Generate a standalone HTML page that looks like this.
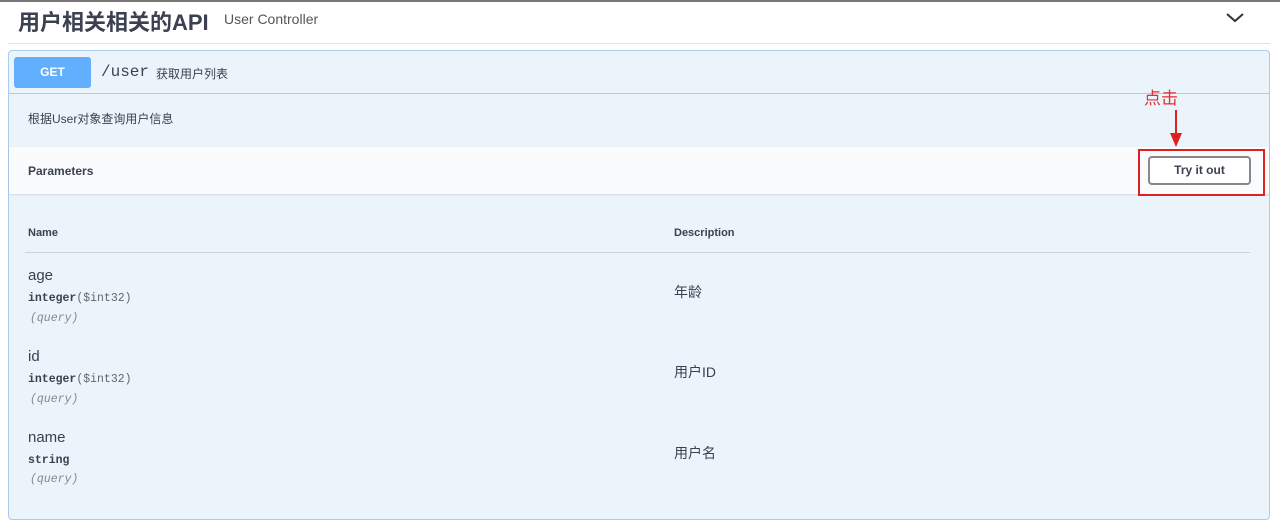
<!DOCTYPE html>
<html><head><meta charset="utf-8"><style>
*{margin:0;padding:0;box-sizing:border-box}
body{width:1280px;height:510px;overflow:hidden;background:#fff;font-family:"Liberation Sans","Noto Sans CJK SC",sans-serif;color:#3b4151;position:relative}
.a{position:absolute;white-space:nowrap}
.mono{font-family:"Liberation Mono","Noto Sans CJK SC",monospace}
</style></head><body>
<div class="a" style="left:0;top:0;width:1280px;height:2px;background:#777"></div>
<div class="a" style="left:18px;top:5px;font-size:22px;font-weight:bold;color:#3b4151">用户相关相关的API</div>
<div class="a" style="left:224px;top:11px;font-size:14px;color:#555">User Controller</div>
<svg class="a" style="left:1225px;top:11px" width="20" height="14" viewBox="0 0 20 14"><path d="M2 3 L10 10 L18 3" fill="none" stroke="#333" stroke-width="2"/></svg>
<div class="a" style="left:8px;top:43px;width:1262px;height:1px;background:#dfe2e6"></div>
<div class="a" style="left:8px;top:50px;width:1262px;height:470px;border:1px solid #a9cbee;border-radius:4px;background:#ebf3fb"></div>
<div class="a" style="left:9px;top:93px;width:1260px;height:1px;background:#a9cbee"></div>
<div class="a" style="left:14px;top:57px;width:77px;height:31px;background:#61affe;border-radius:3px;color:#fff;font-weight:bold;font-size:12px;text-align:center;line-height:31px">GET</div>
<div class="a mono" style="left:101px;top:63px;font-size:16px;color:#3b4151">/user</div>
<div class="a" style="left:156px;top:65px;font-size:12px;color:#3b4151">获取用户列表</div>
<div class="a" style="left:28px;top:110px;font-size:12px;color:#3b4151">根据User对象查询用户信息</div>
<div class="a" style="left:9px;top:147px;width:1260px;height:47px;background:#f9fbfd;box-shadow:0 1px 2px rgba(0,0,0,.1)"></div>
<div class="a" style="left:28px;top:164px;font-size:12px;font-weight:bold">Parameters</div>
<div class="a" style="left:1148px;top:156px;width:103px;height:29px;border:2px solid #888;border-radius:4px;background:#fff;font-size:12px;font-weight:bold;text-align:center;line-height:25px">Try it out</div>
<div class="a" style="left:1138px;top:149px;width:127px;height:47px;border:2px solid #e02020"></div>
<div class="a" style="left:1144px;top:84px;font-size:17px;color:#e03030">点击</div>
<div class="a" style="left:1175px;top:110px;width:2px;height:25px;background:#e02020"></div>
<div class="a" style="left:1170px;top:133px;width:0;height:0;border-left:6px solid transparent;border-right:6px solid transparent;border-top:14px solid #e02020"></div>
<div class="a" style="left:28px;top:227px;font-size:11px;font-weight:bold">Name</div>
<div class="a" style="left:674px;top:227px;font-size:11px;font-weight:bold">Description</div>
<div class="a" style="left:25px;top:252px;width:1225px;height:1px;background:#cdd3dc"></div>

<div class="a" style="left:28px;top:267px;font-size:15px">age</div>
<div class="a mono" style="left:28px;top:292px;font-size:11.5px;font-weight:bold">integer<span style="font-weight:normal;color:#666">($int32)</span></div>
<div class="a mono" style="left:30px;top:312px;font-size:11.5px;font-style:italic;color:#888">(query)</div>
<div class="a" style="left:674px;top:282px;font-size:14px">年龄</div>

<div class="a" style="left:28px;top:348px;font-size:15px">id</div>
<div class="a mono" style="left:28px;top:373px;font-size:11.5px;font-weight:bold">integer<span style="font-weight:normal;color:#666">($int32)</span></div>
<div class="a mono" style="left:30px;top:393px;font-size:11.5px;font-style:italic;color:#888">(query)</div>
<div class="a" style="left:674px;top:362px;font-size:14px">用户ID</div>

<div class="a" style="left:28px;top:429px;font-size:15px">name</div>
<div class="a mono" style="left:28px;top:454px;font-size:11.5px;font-weight:bold">string</div>
<div class="a mono" style="left:30px;top:473px;font-size:11.5px;font-style:italic;color:#888">(query)</div>
<div class="a" style="left:674px;top:443px;font-size:14px">用户名</div>
</body></html>
